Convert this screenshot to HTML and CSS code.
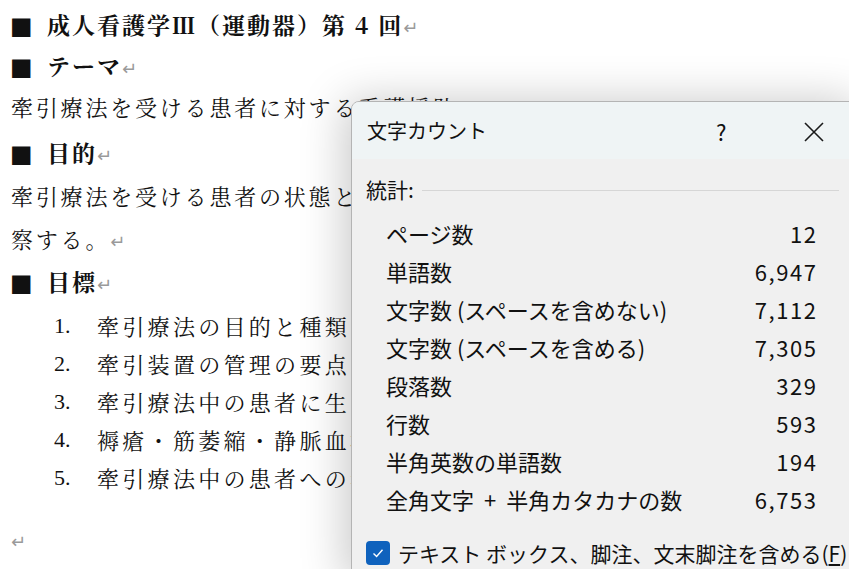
FILE: index.html
```html
<!DOCTYPE html>
<html lang="ja">
<head>
<meta charset="utf-8">
<title>文字カウント</title>
<link rel="stylesheet" href="styles.css">
</head>
<body>
<div class="doc">
  <p class="h first"><span class="sq">■</span><b>成人看護学Ⅲ（運動器）第 4 回</b><span class="ret">↵</span></p>
  <p class="h theme"><span class="sq">■</span><b>テーマ</b><span class="ret">↵</span></p>
  <p class="body">牽引療法を受ける患者に対する看護援助<span class="ret">↵</span></p>
  <p class="h goal"><span class="sq">■</span><b>目的</b><span class="ret">↵</span></p>
  <p class="body">牽引療法を受ける患者の状態と看護の要点を理解し、必要な看護援助について考</p>
  <p class="body">察する。<span class="ret">↵</span></p>
  <p class="h"><span class="sq">■</span><b>目標</b><span class="ret">↵</span></p>
  <ol class="list">
    <li><span class="num">1.</span><span>牽引療法の目的と種類を理解する。</span></li>
    <li><span class="num">2.</span><span>牽引装置の管理の要点を理解する。</span></li>
    <li><span class="num">3.</span><span>牽引療法中の患者に生じやすい問題を理解する。</span></li>
    <li><span class="num">4.</span><span>褥瘡・筋萎縮・静脈血栓症の予防を理解する。</span></li>
    <li><span class="num">5.</span><span>牽引療法中の患者への看護援助を考える。</span></li>
  </ol>
  <p class="body empty"><span class="ret">↵</span></p>
</div>

<div class="dialog">
  <div class="titlebar">
    <span class="title">文字カウント</span>
    <span class="help">?</span>
    <span class="close">
      <svg width="20" height="20" viewBox="0 0 20 20"><path d="M1 1 L19 19 M19 1 L1 19" stroke="#1a1a1a" stroke-width="1.6" fill="none"/></svg>
    </span>
  </div>
  <div class="content">
    <div class="group"><span>統計:</span><span class="rule"></span></div>
    <div class="stats">
      <div class="row"><span>ページ数</span><span class="val">12</span></div>
      <div class="row"><span>単語数</span><span class="val">6,947</span></div>
      <div class="row"><span>文字数 (スペースを含めない)</span><span class="val">7,112</span></div>
      <div class="row"><span>文字数 (スペースを含める)</span><span class="val">7,305</span></div>
      <div class="row"><span>段落数</span><span class="val">329</span></div>
      <div class="row"><span>行数</span><span class="val">593</span></div>
      <div class="row"><span>半角英数の単語数</span><span class="val">194</span></div>
      <div class="row"><span>全角文字<span class="plus">+</span>半角カタカナの数</span><span class="val">6,753</span></div>
    </div>
    <div class="check">
      <span class="box"><svg width="14" height="14" viewBox="0 0 14 14"><path d="M2.5 7.5 L5.6 10.4 L11.5 3.8" stroke="#fff" stroke-width="1.4" fill="none"/></svg></span>
      <span>テキスト ボックス、脚注、文末脚注を含める(<u>F</u>)</span>
    </div>
  </div>
</div>
</body>
</html>
```

FILE: styles.css
```css
html, body {
  margin: 0;
  padding: 0;
  width: 849px;
  height: 569px;
  overflow: hidden;
  background: #ffffff;
}

.doc {
  padding: 4px 0 0 11px;
  font-family: "Noto Serif CJK JP", "Liberation Serif", "Noto Sans CJK JP", serif;
  font-size: 22px;
  color: #111;
  white-space: nowrap;
}

.doc p {
  margin: 0;
  height: 43px;
  line-height: 43px;
}

.doc .first { height: 42px; line-height: 42px; }
.doc .theme { height: 39px; line-height: 39px; }
.doc .goal { margin-top: 3px; }

.body { letter-spacing: 2.8px; }

.h b {
  font-weight: 700;
  font-size: 23px;
  letter-spacing: 2px;
}

.sq {
  display: inline-block;
  width: 37px;
  font-family: "DejaVu Sans", sans-serif;
  font-size: 24px;
  line-height: 1;
  margin-left: -1px;
}

.ret {
  font-family: "DejaVu Sans", sans-serif;
  font-size: 18px;
  line-height: 1;
  color: #9a9a9a;
  letter-spacing: 0;
  margin-left: 0;
}

.list {
  list-style: none;
  margin: 4px 0 0;
  padding: 0 0 0 43px;
}

.list li {
  display: flex;
  height: 38px;
  line-height: 38px;
  letter-spacing: 3.3px;
}

.num {
  width: 43px;
  font-family: "Liberation Serif", serif;
  letter-spacing: 0;
}

.doc .empty { margin-top: 20px; }

/* dialog */
.dialog {
  position: absolute;
  left: 351px;
  top: 101px;
  width: 510px;
  height: 480px;
  border: 1px solid #b4b4b4;
  border-radius: 8px 8px 0 0;
  background: #f0f0f0;
  box-shadow: -6px 0 45px rgba(0, 0, 0, 0.22);
  font-family: "Noto Sans CJK JP", "Noto Sans", sans-serif;
  color: #111;
  overflow: hidden;
}

.titlebar {
  height: 57px;
  background: #eff4f5;
  display: flex;
  align-items: center;
  padding-left: 15px;
}

.title {
  font-size: 20px;
  flex: 1;
}

.help {
  font-size: 22px;
  width: 88px;
}

.close {
  display: flex;
  width: 58px;
  margin-top: 2px;
}

.content {
  padding: 10px 0 0 14px;
}

.group {
  display: flex;
  align-items: center;
  height: 40px;
  font-size: 21px;
}

.rule {
  width: 417px;
  margin-left: 8px;
  border-top: 1px solid #d6d6d6;
  margin-top: 2px;
}

.stats {
  width: 430px;
  margin: 5px 0 0 20px;
}

.row {
  display: flex;
  justify-content: space-between;
  height: 38px;
  align-items: center;
  font-size: 22px;
}

.val {
  letter-spacing: 1.6px;
  margin-right: -1.6px;
}

.plus {
  margin: 0 10px;
}

.check {
  display: flex;
  align-items: center;
  margin-top: 20px;
  font-size: 21px;
  white-space: nowrap;
}

.box {
  width: 24px;
  height: 24px;
  flex: none;
  border-radius: 4px;
  background: #0f62bd;
  display: flex;
  align-items: center;
  justify-content: center;
  margin-right: 8px;
}
```
